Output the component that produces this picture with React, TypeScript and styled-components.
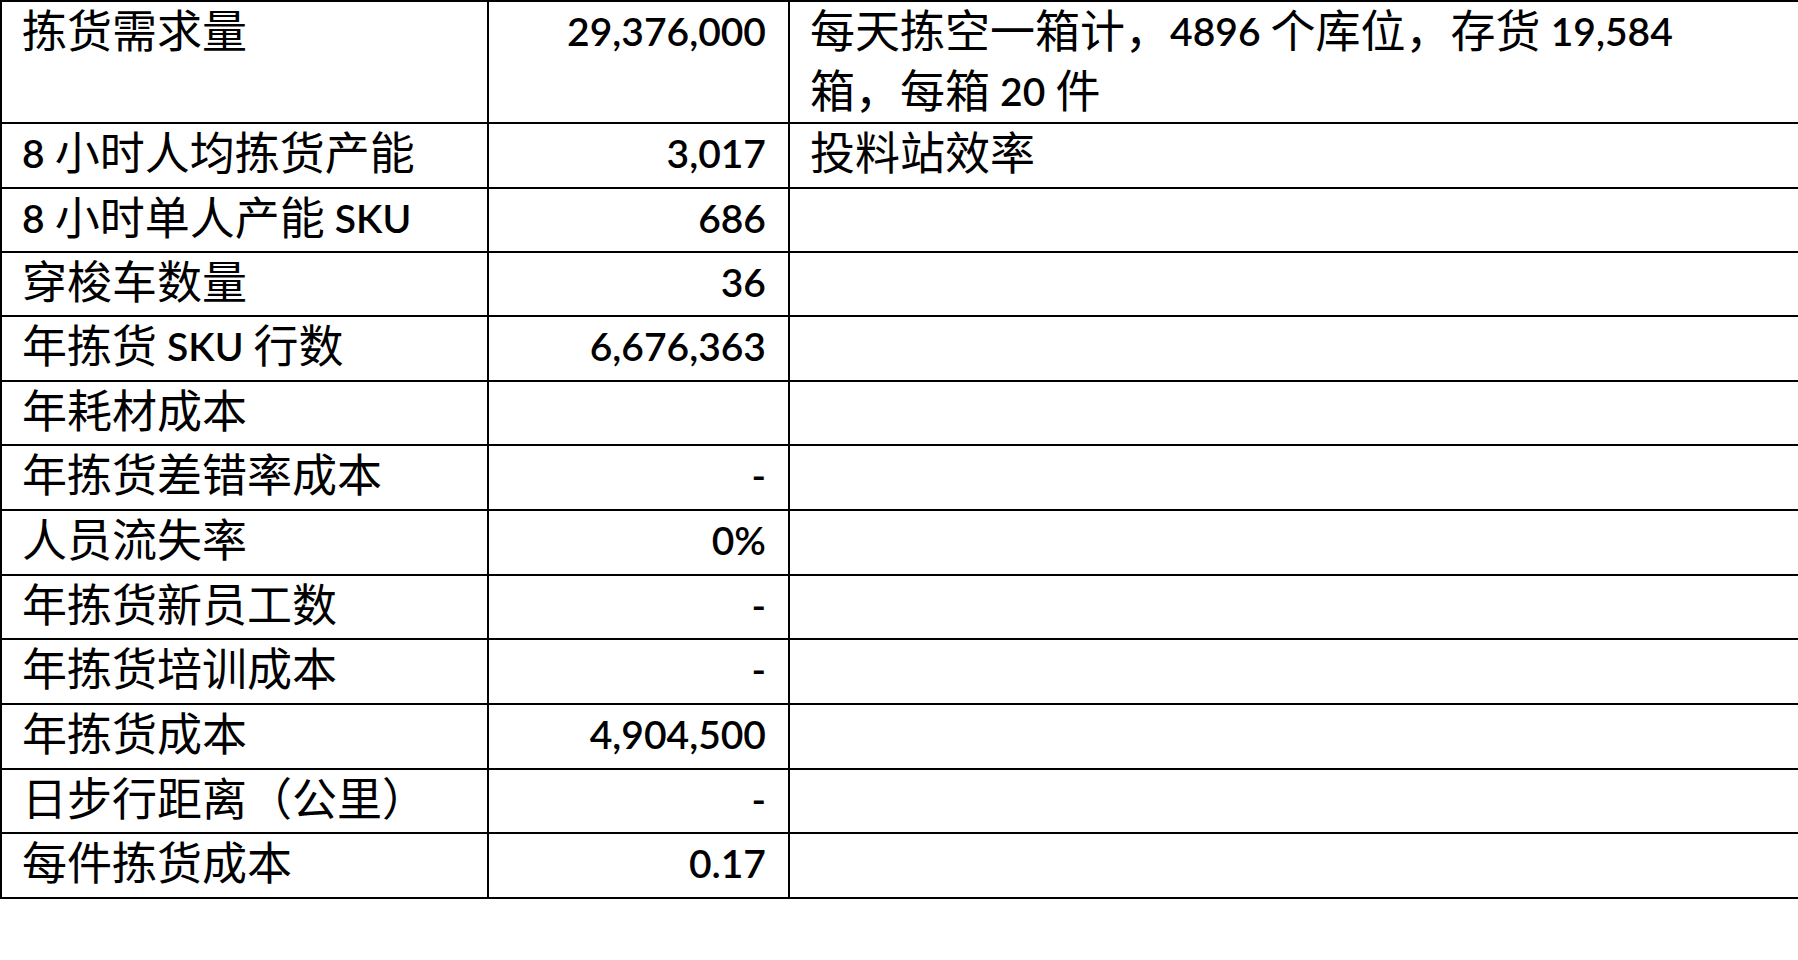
import React from 'react';
import styled, { createGlobalStyle } from 'styled-components';

interface Row {
  label: string;
  value?: string;
  note?: React.ReactNode;
}

const GlobalStyle = createGlobalStyle`
  html, body {
    margin: 0;
    padding: 0;
    background: #ffffff;
    overflow: hidden;
  }
`;

const Sheet = styled.div`
  display: grid;
  width: 1800px;
  grid-template-columns: 485px 299px 1008px;
  grid-template-rows: 120px 63px 62px 62px 63px 62px 63px 63px 62px 63px 63px 62px 63px;
  gap: 2px;
  padding: 2px;
  box-sizing: border-box;
  background: #000000;
`;

const Cell = styled.div<{ $align?: 'left' | 'right' }>`
  background: #ffffff;
  color: #000000;
  font-family: 'Noto Sans CJK SC', 'Noto Sans', sans-serif;
  font-size: 45px;
  line-height: 54px;
  text-align: ${(p) => p.$align ?? 'left'};
  padding: 0 ${(p) => (p.$align === 'right' ? '22px' : '20px')};
  white-space: nowrap;
`;

// a wrapped note keeps the wider line spacing of the source table
const Text = styled.div<{ $multi?: boolean }>`
  line-height: ${(p) => (p.$multi ? '58px' : '54px')};
  margin-top: ${(p) => (p.$multi ? '-2px' : '0')};
`;

const Latin = styled.span`
  font-family: Lato, 'Liberation Sans', sans-serif;
  font-size: 39px;
  font-weight: 600;
  vertical-align: 2px;
`;

// split text into CJK and latin runs, so latin digits get the narrower latin face
const mixed = (text: string) =>
  text.split(/([A-Za-z0-9,.%\-]+)/).map((part, i) =>
    /[A-Za-z0-9,.%\-]/.test(part) ? <Latin key={i}>{part}</Latin> : part
  );

const rows: Row[] = [
  {
    label: '拣货需求量',
    value: '29,376,000',
    note: (
      <>
        {mixed('每天拣空一箱计，4896 个库位，存货 19,584')}
        <br />
        {mixed('箱，每箱 20 件')}
      </>
    ),
  },
  { label: '8 小时人均拣货产能', value: '3,017', note: '投料站效率' },
  { label: '8 小时单人产能 SKU', value: '686' },
  { label: '穿梭车数量', value: '36' },
  { label: '年拣货 SKU 行数', value: '6,676,363' },
  { label: '年耗材成本' },
  { label: '年拣货差错率成本', value: '-' },
  { label: '人员流失率', value: '0%' },
  { label: '年拣货新员工数', value: '-' },
  { label: '年拣货培训成本', value: '-' },
  { label: '年拣货成本', value: '4,904,500' },
  { label: '日步行距离（公里）', value: '-' },
  { label: '每件拣货成本', value: '0.17' },
];

const App: React.FC = () => {
  return (
    <>
      <GlobalStyle />
      <Sheet>
        {rows.map((row) => (
          <React.Fragment key={row.label}>
            <Cell>
              <Text>{mixed(row.label)}</Text>
            </Cell>
            <Cell $align="right">
              <Text>{row.value && <Latin>{row.value}</Latin>}</Text>
            </Cell>
            <Cell>
              <Text $multi={typeof row.note !== 'string' && !!row.note}>
                {typeof row.note === 'string' ? mixed(row.note) : row.note}
              </Text>
            </Cell>
          </React.Fragment>
        ))}
      </Sheet>
    </>
  );
};

export default App;
